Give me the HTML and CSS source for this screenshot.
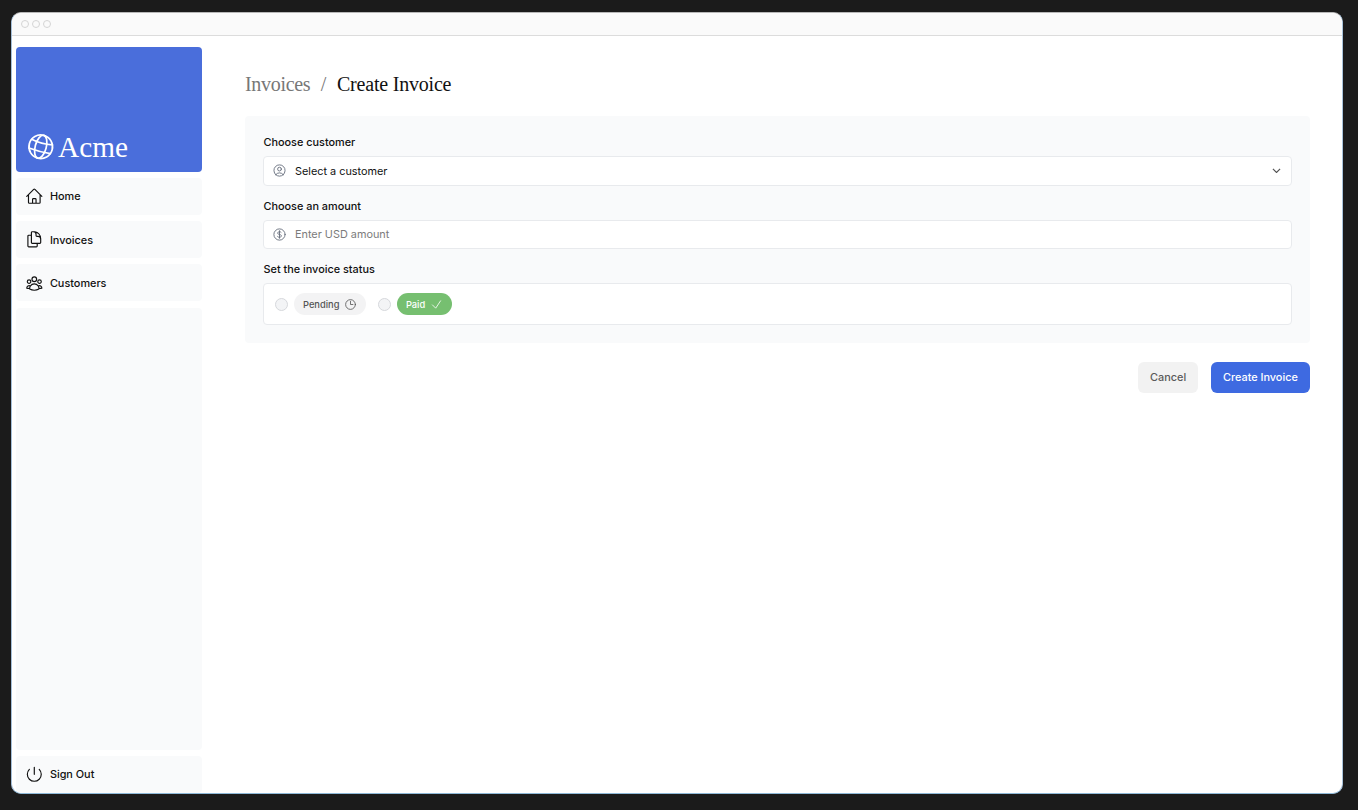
FILE: index.html
```html
<!DOCTYPE html>
<html lang="en">
<head>
<meta charset="utf-8">
<title>Create Invoice</title>
<link rel="stylesheet" href="styles.css">
</head>
<body>
<div class="window">
  <div class="titlebar"><span class="dot"></span><span class="dot"></span><span class="dot"></span></div>
  <div class="app">
    <aside class="sidebar">
      <a class="brand">
        <svg class="icon globe" viewBox="0 0 24 24"><circle cx="12" cy="12" r="9"/><ellipse cx="12" cy="12" rx="4.2" ry="9"/><path d="M3.8 8.3Q12 10 20.2 8.3M3.6 15.2Q12 16 20.4 15.2"/></svg>
        <span class="brand-name">Acme</span>
      </a>
      <a class="nav-item">
        <svg class="icon" viewBox="0 0 24 24"><path d="M2.25 12l8.954-8.955c.44-.439 1.152-.439 1.591 0L21.75 12M4.5 9.75v10.125c0 .621.504 1.125 1.125 1.125H9.75v-4.875c0-.621.504-1.125 1.125-1.125h2.25c.621 0 1.125.504 1.125 1.125V21h4.125c.621 0 1.125-.504 1.125-1.125V9.75M8.25 21h8.25"/></svg>
        <span>Home</span>
      </a>
      <a class="nav-item">
        <svg class="icon" viewBox="0 0 24 24"><path d="M15.75 17.25v3.375c0 .621-.504 1.125-1.125 1.125h-9.75a1.125 1.125 0 01-1.125-1.125V7.875c0-.621.504-1.125 1.125-1.125H6.75a9.06 9.06 0 011.5.124m7.5 10.376h3.375c.621 0 1.125-.504 1.125-1.125V11.25c0-4.46-3.243-8.161-7.5-8.876a9.06 9.06 0 00-1.5-.124H9.375c-.621 0-1.125.504-1.125 1.125v3.5m7.5 10.375H9.375a1.125 1.125 0 01-1.125-1.125v-9.25m12 6.625v-1.875a3.375 3.375 0 00-3.375-3.375h-1.5a1.125 1.125 0 01-1.125-1.125v-1.5a3.375 3.375 0 00-3.375-3.375H9.75"/></svg>
        <span>Invoices</span>
      </a>
      <a class="nav-item">
        <svg class="icon" viewBox="0 0 24 24"><path d="M18 18.72a9.094 9.094 0 003.741-.479 3 3 0 00-4.682-2.72m.94 3.198l.001.031c0 .225-.012.447-.037.666A11.944 11.944 0 0112 21c-2.17 0-4.207-.576-5.963-1.584A6.062 6.062 0 016 18.719m12 0a5.971 5.971 0 00-.941-3.197m0 0A5.995 5.995 0 0012 12.75a5.995 5.995 0 00-5.058 2.772m0 0a3 3 0 00-4.681 2.72 8.986 8.986 0 003.74.477m.94-3.197a5.971 5.971 0 00-.94 3.197M15 6.75a3 3 0 11-6 0 3 3 0 016 0zm6 3a2.25 2.25 0 11-4.5 0 2.25 2.25 0 014.5 0zm-13.5 0a2.25 2.25 0 11-4.5 0 2.25 2.25 0 014.5 0z"/></svg>
        <span>Customers</span>
      </a>
      <div class="nav-fill"></div>
      <a class="nav-item">
        <svg class="icon" viewBox="0 0 24 24"><path d="M5.636 5.636a9 9 0 1012.728 0M12 3v9"/></svg>
        <span>Sign Out</span>
      </a>
    </aside>
    <main class="main">
      <nav class="crumbs">
        <span class="crumb crumb-parent">Invoices</span><span class="crumb crumb-sep">/</span><span class="crumb crumb-current">Create Invoice</span>
      </nav>
      <form class="card">
        <div class="label">Choose customer</div>
        <div class="field select">
          <svg class="icon" viewBox="0 0 24 24"><path d="M17.982 18.725A7.488 7.488 0 0012 15.75a7.488 7.488 0 00-5.982 2.975m11.963 0a9 9 0 10-11.963 0m11.963 0A8.966 8.966 0 0112 21a8.966 8.966 0 01-5.982-2.275M15 9.75a3 3 0 11-6 0 3 3 0 016 0z"/></svg>
          <span class="value">Select a customer</span>
          <svg class="chevron" viewBox="0 0 10 6"><path d="M1 1l4 4 4-4"/></svg>
        </div>
        <div class="label">Choose an amount</div>
        <div class="field">
          <svg class="icon" viewBox="0 0 24 24"><path d="M12 6v12m-3-2.818l.879.659c1.171.879 3.07.879 4.242 0 1.172-.879 1.172-2.303 0-3.182C13.536 12.219 12.768 12 12 12c-.725 0-1.45-.22-2.003-.659-1.106-.879-1.106-2.303 0-3.182s2.9-.879 4.006 0l.415.33M21 12a9 9 0 11-18 0 9 9 0 0118 0z"/></svg>
          <span class="placeholder">Enter USD amount</span>
        </div>
        <div class="label">Set the invoice status</div>
        <div class="statuses">
          <span class="radio"></span>
          <span class="pill pill-pending"><span>Pending</span><svg class="icon" viewBox="0 0 24 24"><path d="M12 6v6h4.5m4.5 0a9 9 0 11-18 0 9 9 0 0118 0z"/></svg></span>
          <span class="radio"></span>
          <span class="pill pill-paid"><span>Paid</span><svg class="icon" viewBox="0 0 24 24"><path d="M4.5 12.75l6 6 9-13.5"/></svg></span>
        </div>
      </form>
      <div class="actions">
        <a class="btn btn-cancel">Cancel</a>
        <a class="btn btn-primary">Create Invoice</a>
      </div>
    </main>
  </div>
</div>
</body>
</html>
```
FILE: styles.css
```css
* { box-sizing: border-box; }

body {
  margin: 0;
  height: 810px;
  padding: 12px 15px 16px 11px;
  background: #1b1b1b;
  overflow: hidden;
  font-family: Inter, "Liberation Sans", sans-serif;
  font-size: 10.87px;
  color: #111;
}

.window {
  height: 782px;
  display: flex;
  flex-direction: column;
  background: #fff;
  border: 1px solid;
  border-color: #b8b8b8 #a9c3dc #8fb9d8 #a5bfd8;
  border-radius: 10px;
  overflow: hidden;
}

.titlebar {
  height: 23px;
  flex: none;
  display: flex;
  align-items: center;
  gap: 3px;
  padding: 0 0 0 9px;
  background: #fafafa;
  border-bottom: 1px solid #dcdcdc;
}
.dot {
  width: 8px;
  height: 8px;
  border: 1px solid #d4d4d4;
  border-radius: 50%;
}

.app { flex: 1; display: flex; min-height: 0; }

.sidebar {
  width: 190px;
  padding: 11.5px 0 0 4px;
  display: flex;
  flex-direction: column;
  gap: 6.2px;
}

.icon {
  flex: none;
  fill: none;
  stroke: currentColor;
  stroke-width: 1.5;
  stroke-linecap: round;
  stroke-linejoin: round;
}

.brand {
  height: 124.4px;
  flex: none;
  display: flex;
  align-items: flex-end;
  margin-top: -0.4px;
  padding: 0 0 9.5px 9px;
  border-radius: 4px;
  background: #4a6edb;
  color: #fff;
}
.globe { width: 31.5px; height: 31.5px; stroke-width: 1.3; transform: rotate(15deg); }
.brand-name {
  margin-left: 1.5px;
  font: 29.3px/30px "Liberation Serif", serif;
}

.nav-item {
  height: 37.15px;
  flex: none;
  display: flex;
  align-items: center;
  gap: 6px;
  padding-left: 9.3px;
  border-radius: 4px;
  background: #f9fafb;
  font-weight: 500;
}
.nav-item .icon { width: 18.6px; height: 18.6px; }
.nav-fill { flex: 1; border-radius: 4px; background: #f9fafb; }

.main { flex: 1; padding: 36px 32px 0 43px; }

.crumbs {
  display: flex;
  height: 24px;
  font: 20px/24px "Liberation Serif", serif;
}
.crumb-parent { letter-spacing: -0.3px; }
.crumb-current { letter-spacing: -0.2px; }
.crumb-parent, .crumb-sep { color: #777; }
.crumb-sep { margin: 0 10.5px; }

.card {
  margin-top: 20px;
  height: 227px;
  padding: 18px;
  border-radius: 4px;
  background: #f9fafb;
}
.label { height: 16px; line-height: 16px; margin: 0 0 6px 0.5px; font-weight: 500; }
.field {
  height: 29.5px;
  margin-bottom: 12px;
  display: flex;
  align-items: center;
  padding: 0 10.5px 0 8.3px;
  background: #fff;
  border: 1px solid #e8eaed;
  border-radius: 4px;
}
.field .icon { width: 15px; height: 15px; color: #6b7280; }
.value, .placeholder { margin-left: 7.7px; flex: 1; }
.placeholder { color: #7b7b7b; }
.chevron { width: 9px; height: 5.4px; fill: none; stroke: #555; stroke-width: 1.3; }

.statuses {
  height: 42px;
  display: flex;
  align-items: center;
  padding-left: 11px;
  background: #fff;
  border: 1px solid #e8eaed;
  border-radius: 4px;
}
.radio {
  width: 13px;
  height: 13px;
  border: 1px solid #d6d8dc;
  border-radius: 50%;
  background: #f3f4f6;
}
.pill {
  height: 22px;
  display: flex;
  align-items: center;
  gap: 5px;
  margin: 0 12px 0 6px;
  padding: 0 9px;
  border-radius: 11px;
  font-size: 9.3px;
  font-weight: 500;
}
.pill .icon { width: 13px; height: 13px; }
.pill-pending { background: #f3f3f4; color: #555; }
.pill-paid { padding: 0 8.5px; background: #76bf70; color: #fff; }

.actions { display: flex; justify-content: flex-end; gap: 12.5px; margin-top: 18.6px; }
.btn {
  height: 31px;
  display: flex;
  align-items: center;
  padding: 0 12.2px;
  border-radius: 6px;
  font-weight: 500;
}
.btn-cancel { background: #f2f2f2; color: #5a5a5a; }
.btn-primary { background: #3e6ae1; color: #fff; }
```
